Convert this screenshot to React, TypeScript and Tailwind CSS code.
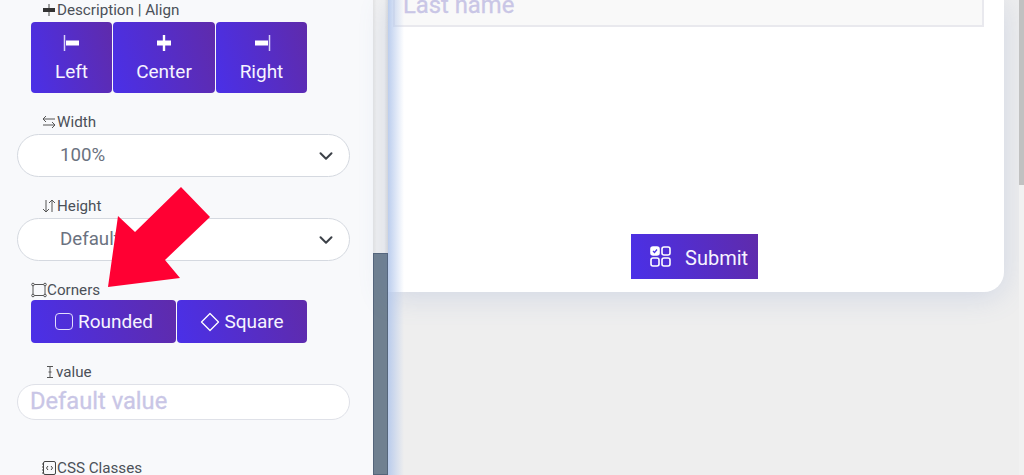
import React from "react";
import { ChevronDown } from "lucide-react";

const font = "font-['Roboto',sans-serif]";

function Label({ icon, text, cls }: { icon: React.ReactNode; text: string; cls: string }) {
  return (
    <div className={`flex items-center text-[15.2px] leading-[16px] text-[#4b5058] ${cls}`}>
      {icon}
      <span>{text}</span>
    </div>
  );
}

function Select({ value }: { value: string }) {
  return (
    <div className="flex items-center justify-between h-[43px] w-[333px] ml-[17px] rounded-[22px] border border-[#d5d9e0] bg-white pl-[42px] pr-[12px]">
      <span className="text-[18.7px] text-[#6b7280]">{value}</span>
      <ChevronDown size={22} strokeWidth={2.2} className="text-[#3c4148]" />
    </div>
  );
}

const grad = "bg-[linear-gradient(75deg,#4a30e8,#5f2bab)]";

function AlignButton({ w, label, icon }: { w: string; label: string; icon: React.ReactNode }) {
  return (
    <div className={`${w} h-[71px] ${grad} rounded-[4px] flex flex-col items-center text-[#f6f4ff] text-[19px] leading-[20px]`}>
      <div className="h-[18px] mt-[12px] flex items-center">{icon}</div>
      <span className="mt-[10px]">{label}</span>
    </div>
  );
}

export default function App() {
  return (
    <div className={`${font} relative flex h-[475px] w-[1024px] overflow-hidden bg-[#eeeeee]`}>
      {/* Sidebar */}
      <div className="w-[373px] shrink-0 bg-[#f8f9fb] pt-[2px]">
        <Label
          cls="ml-[43px]"
          text="Description | Align"
          icon={
            <svg width="14" height="16" viewBox="0 0 14 16" className="shrink-0">
              <path d="M6 2v12" stroke="#666" strokeWidth="1.2" />
              <rect x="0" y="6" width="12" height="4" fill="#333" />
            </svg>
          }
        />
        <div className="flex ml-[31px] mt-[4px] gap-[1px]">
          <AlignButton
            w="w-[81px]"
            label="Left"
            icon={
              <svg width="18" height="18" viewBox="0 0 18 18">
                <path d="M1.5 1v16" stroke="#d8d3f8" strokeWidth="1.5" />
                <rect x="3" y="6.5" width="13" height="5" fill="#fff" />
              </svg>
            }
          />
          <AlignButton
            w="w-[102px]"
            label="Center"
            icon={
              <svg width="16" height="18" viewBox="0 0 16 18">
                <path d="M8 1v16" stroke="#fff" strokeWidth="2.4" />
                <rect x="1" y="6.5" width="14" height="5" fill="#fff" />
              </svg>
            }
          />
          <AlignButton
            w="w-[91px]"
            label="Right"
            icon={
              <svg width="18" height="18" viewBox="0 0 18 18">
                <path d="M16.5 1v16" stroke="#d8d3f8" strokeWidth="1.5" />
                <rect x="2" y="6.5" width="13" height="5" fill="#fff" />
              </svg>
            }
          />
        </div>

        <Label
          cls="ml-[41px] mt-[21px]"
          text="Width"
          icon={
            <svg width="16" height="16" viewBox="0 0 16 16" fill="none" stroke="#555" strokeWidth="1" className="shrink-0">
              <path d="M14 5H2M5 2 2 5l3 3M2 11h12M11 8l3 3-3 3" />
            </svg>
          }
        />
        <div className="mt-[4px]">
          <Select value="100%" />
        </div>

        <Label
          cls="ml-[41px] mt-[21px]"
          text="Height"
          icon={
            <svg width="16" height="16" viewBox="0 0 16 16" fill="none" stroke="#555" strokeWidth="1" className="shrink-0">
              <path d="M5 2v12M2 11l3 3 3-3M11 14V2M8 5l3-3 3 3" />
            </svg>
          }
        />
        <div className="mt-[4px]">
          <Select value="Default" />
        </div>

        <Label
          cls="ml-[31px] mt-[21px]"
          text="Corners"
          icon={
            <svg width="16" height="16" viewBox="0 0 16 16" fill="none" stroke="#555" strokeWidth="1" className="shrink-0">
              <path d="M3 2.5h10M3 13.5h10M2 3v10M14 3v10" />
              <circle cx="2" cy="2.5" r="1.3" fill="#f8f9fb" />
              <circle cx="14" cy="2.5" r="1.3" fill="#f8f9fb" />
              <circle cx="2" cy="13.5" r="1.3" fill="#f8f9fb" />
              <circle cx="14" cy="13.5" r="1.3" fill="#f8f9fb" />
            </svg>
          }
        />
        <div className="flex ml-[31px] mt-[2px] gap-[1px] text-[#f6f4ff] text-[19px]">
          <div className={`w-[145px] h-[43px] ${grad} rounded-[4px] flex items-center justify-center gap-[5px] pl-[1px] pt-[2px]`}>
            <span className="w-[18px] h-[17px] rounded-[4px] border-[1.5px] border-[#e2defc] -mt-[2px]" />
            <span>Rounded</span>
          </div>
          <div className={`w-[130px] h-[43px] ${grad} rounded-[4px] flex items-center justify-center gap-[4px] pt-[2px]`}>
            <svg width="20" height="20" viewBox="0 0 20 20" fill="none" stroke="#fff" strokeWidth="1.3" className="-mt-[2px]">
              <path d="M10 1.5 18.5 10 10 18.5 1.5 10Z" strokeLinejoin="round" />
            </svg>
            <span>Square</span>
          </div>
        </div>

        <div className="ml-[44px] mt-[21px] flex items-center text-[15.2px] leading-[16px] text-[#4b5058]">
          <svg width="12" height="16" viewBox="0 0 12 16" fill="none" stroke="#555" strokeWidth="1" className="shrink-0">
            <path d="M3 2.5h6M3 13.5h6M6 2.5v11M4.5 8h3" />
          </svg>
          <span>value</span>
        </div>
        <div className="flex items-center h-[36px] w-[333px] ml-[17px] mt-[4px] rounded-[18px] border border-[#dfe1e8] bg-white pl-[12px]">
          <span className="text-[23.7px] leading-[28px] -mt-[3px] text-[#c9c6e6] [-webkit-text-stroke:0.3px_#c9c6e6]">Default value</span>
        </div>

        <Label
          cls="ml-[41px] mt-[40px]"
          text="CSS Classes"
          icon={
            <svg width="16" height="16" viewBox="0 0 16 16" fill="none" stroke="#444" strokeWidth="1" className="shrink-0">
              <rect x="2.5" y="1.5" width="12" height="13" rx="1.5" />
              <path d="M1 4h2M1 7h2M1 10h2M1 13h2" strokeDasharray="1 1" />
              <path d="M7 6 5.5 8 7 10M10 6l1.5 2L10 10" />
            </svg>
          }
        />
      </div>

      {/* Left scrollbar */}
      <div className="w-[15px] shrink-0 flex flex-col bg-[linear-gradient(90deg,#e4e4e4,#f1f1f1_25%,#f1f1f1_75%,#dedede)]">
        <div className="h-[253px]" />
        <div className="flex-1 bg-[#708090] border border-[#55657a]" />
      </div>

      {/* Main */}
      <div className="flex-1 flex flex-col min-w-0">
        <div className="w-[616px] h-[292px] bg-white rounded-br-[20px] shadow-[0_4px_30px_rgba(90,120,190,0.2)] flex flex-col pl-[5px] pr-[20px]">
          <div className="h-[40px] -mt-[13px] border-x-2 border-b-2 border-[#e9e9ee] bg-[#f9f9f9] pl-[8px] flex items-center">
            <span className="text-[23.8px] leading-[24px] -mt-[3px] text-[#c9c6e6] [-webkit-text-stroke:0.3px_#c9c6e6]">Last name</span>
          </div>
          <div className={`mt-auto mb-[13px] self-start ml-[238px] w-[127px] h-[45px] flex items-center ${grad} text-[#f6f4ff] text-[20px] pl-[19px] gap-[14px]`}>
            <svg width="21" height="21" viewBox="0 0 21 21" fill="none" stroke="#fff" strokeWidth="1.6">
              <rect x="1" y="1" width="8" height="8" rx="2" fill="#fff" />
              <path d="M3 5l1.5 1.5L7 3.5" stroke="#4a32e4" strokeWidth="1.2" />
              <rect x="12" y="1" width="8" height="8" rx="2" />
              <rect x="1" y="12" width="8" height="8" rx="2" />
              <rect x="12" y="12" width="8" height="8" rx="2" />
            </svg>
            <span className="pt-[2px]">Submit</span>
          </div>
        </div>
      </div>

      {/* Right scrollbar */}
      <div className="w-[5px] shrink-0 bg-[#f1f1f1]">
        <div className="h-[185px] bg-[#c1c1c1]" />
      </div>

      {/* Sidebar's blue shadow falling over the main area */}
      <div className="absolute left-[388px] top-0 h-full w-[16px] pointer-events-none bg-[linear-gradient(90deg,rgba(180,200,236,0.9),rgba(200,215,245,0))]" />

      {/* Annotation arrow */}
      <svg className="absolute left-0 top-0 pointer-events-none" width="300" height="300" viewBox="0 0 300 300">
        <polygon points="108,287 118,216 135,232 181,187 210,217 165,260 180,278" fill="#ff0033" />
      </svg>
    </div>
  );
}
